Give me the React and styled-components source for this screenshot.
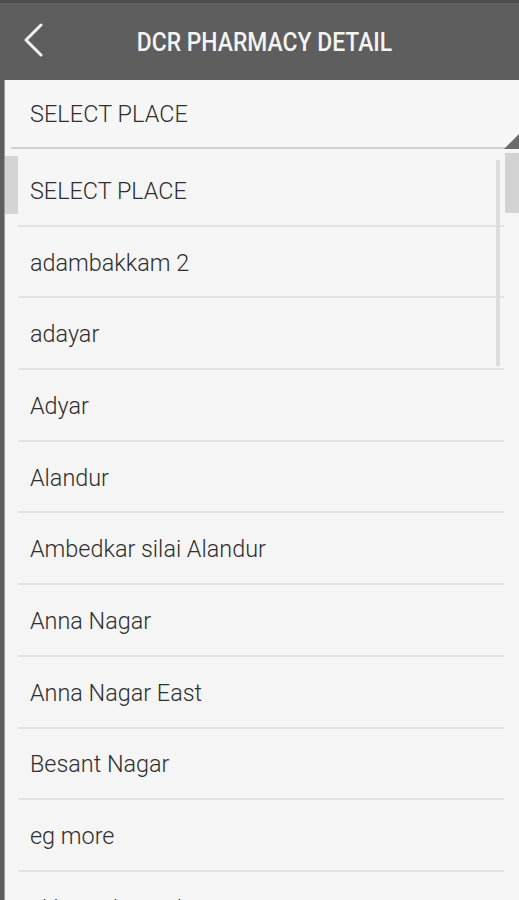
import React from "react";
import styled, { createGlobalStyle } from "styled-components";

const Global = createGlobalStyle`
  html, body { margin: 0; padding: 0; }
  body { background: #5e5e5e; font-family: Roboto, "Noto Sans", sans-serif; overflow: hidden; }
`;

const Screen = styled.div`
  width: 519px;
  height: 900px;
  display: flex;
  flex-direction: column;
  background: #5e5e5e;
  overflow: hidden;
`;

const Header = styled.header`
  height: 80px;
  flex: 0 0 80px;
  display: grid;
  grid-template-columns: 70px 1fr 70px;
  align-items: center;
  background: linear-gradient(#4c4c4c 0, #4c4c4c 3px, #5e5e5e 3px);
`;

const BackButton = styled.button`
  border: 0;
  background: none;
  padding: 0 0 0 22px;
  height: 80px;
  display: flex;
  align-items: center;
`;

const Title = styled.h1`
  margin: 0;
  color: #f4f4f4;
  font-family: Roboto, sans-serif;
  font-weight: 500;
  font-size: 26px;
  text-align: center;
  white-space: nowrap;
  transform: translateX(5px) scaleX(0.88);
  padding-top: 3px;
`;

const Body = styled.div`
  flex: 1;
  margin-left: 4px;
  background: #f6f6f6;
  display: flex;
  flex-direction: column;
  border-left: 1px solid #9a9a9a;
`;

const Spinner = styled.div`
  position: relative;
  height: 74px;
  flex: 0 0 74px;
  display: flex;
  flex-direction: column;
`;

const SpinnerLabel = styled.div`
  flex: 1;
  display: flex;
  align-items: center;
  padding-left: 25px;
  font-size: 23.4px;
  font-weight: 300;
  color: #2e2e2e;
  letter-spacing: 0.1px;
`;

const SpinnerLine = styled.div`
  height: 2px;
  margin: 0 14px 5px 6px;
  background: #d2d2d2;
`;

const Corner = styled.svg`
  position: absolute;
  right: 0;
  bottom: 5px;
`;

const List = styled.div`
  position: relative;
  flex: 1;
  background: #f5f5f5;
  display: flex;
  flex-direction: column;
  padding-top: 1px;
`;

const Row = styled.div`
  height: 71.7px;
  flex: 0 0 71.7px;
  display: flex;
  align-items: center;
  margin: 0 15px 0 13px;
  padding: 2px 0 0 12px;
  font-size: 23.4px;
  font-weight: 300;
  color: #2e2e2e;
  box-sizing: border-box;
  border-bottom: ${(p) => (p.$last ? "none" : "2px solid #e3e3e3")};
`;

const EdgeGlowLeft = styled.div`
  position: absolute;
  left: 0;
  top: 2px;
  width: 13px;
  height: 58px;
  background: #d4d4d4;
`;

const EdgeGlowRight = styled.div`
  position: absolute;
  right: 0;
  top: -1px;
  width: 14px;
  height: 60px;
  background: #d2d2d2;
`;

const ScrollThumb = styled.div`
  position: absolute;
  right: 19px;
  top: 6px;
  width: 4px;
  height: 206px;
  background: #dcdcdc;
`;

const places = [
  "SELECT PLACE",
  "adambakkam 2",
  "adayar",
  "Adyar",
  "Alandur",
  "Ambedkar silai Alandur",
  "Anna Nagar",
  "Anna Nagar East",
  "Besant Nagar",
  "eg more",
  "ekkattuthangal",
];

export default function App() {
  return (
    <>
      <Global />
      <Screen>
        <Header>
          <BackButton aria-label="Back">
            <svg width="24" height="34" viewBox="0 0 24 34">
              <polyline
                points="19,2 4,17 19,32"
                fill="none"
                stroke="#f2f2f2"
                strokeWidth="3"
                strokeLinecap="round"
                strokeLinejoin="round"
              />
            </svg>
          </BackButton>
          <Title>DCR PHARMACY DETAIL</Title>
          <div />
        </Header>
        <Body>
          <Spinner>
            <SpinnerLabel>SELECT PLACE</SpinnerLabel>
            <SpinnerLine />
            <Corner width="15" height="15" viewBox="0 0 15 15">
              <polygon points="0,15 15,0 15,15" fill="#6a6a6a" />
            </Corner>
          </Spinner>
          <List>
            {places.map((p, i) => (
              <Row key={p} $last={i === places.length - 1}>
                {p}
              </Row>
            ))}
            <EdgeGlowLeft />
            <EdgeGlowRight />
            <ScrollThumb />
          </List>
        </Body>
      </Screen>
    </>
  );
}
